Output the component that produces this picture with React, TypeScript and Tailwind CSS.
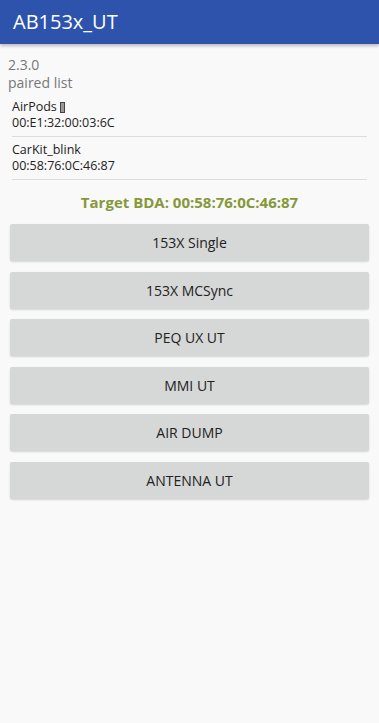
const devices = [
  { name: 'AirPods', glyph: true, mac: '00:E1:32:00:03:6C' },
  { name: 'CarKit_blink', glyph: false, mac: '00:58:76:0C:46:87' },
]

const actions = ['153X Single', '153X MCSync', 'PEQ UX UT', 'MMI UT', 'AIR DUMP', 'ANTENNA UT']

export default function App() {
  return (
    <div className="min-h-screen bg-[#f9f9f9] font-['Open_Sans','Liberation_Sans',sans-serif]">
      <header className="flex h-[44px] items-center bg-[#2d53ad] px-[13px] shadow-[0_2px_3px_rgba(0,0,0,0.25)]">
        <h1 className="text-[20px] font-medium text-white">AB153x_UT</h1>
      </header>

      <div className="px-[8px] pt-[12px]">
        <p className="text-[14px] leading-[18px] text-[#777]">2.3.0</p>
        <p className="text-[14px] leading-[18px] text-[#777]">paired list</p>

        <ul className="mt-[2px] px-[4px]">
          {devices.map((d) => (
            <li key={d.mac} className="border-b border-[#dcdcdc] py-[5px] text-[12.5px] leading-[16px] text-[#222]">
              <div className="flex items-center gap-[3px]">
                {d.name}
                {d.glyph && <span className="inline-block h-[11px] w-[5px] border border-[#444] bg-[#999]" />}
              </div>
              <div>{d.mac}</div>
            </li>
          ))}
        </ul>

        <p className="mt-[12px] text-center text-[15px] leading-[20px] font-bold text-[#86983a]">Target BDA: 00:58:76:0C:46:87</p>
      </div>

      <div className="mt-[12px] flex flex-col gap-[10.5px] px-[10px]">
        {actions.map((a) => (
          <button
            key={a}
            className="h-[37px] rounded-[2px] bg-[#d6d7d7] text-[14px] font-medium text-[#222] shadow-[0_1px_2px_rgba(0,0,0,0.15)]"
          >
            {a}
          </button>
        ))}
      </div>
    </div>
  )
}
